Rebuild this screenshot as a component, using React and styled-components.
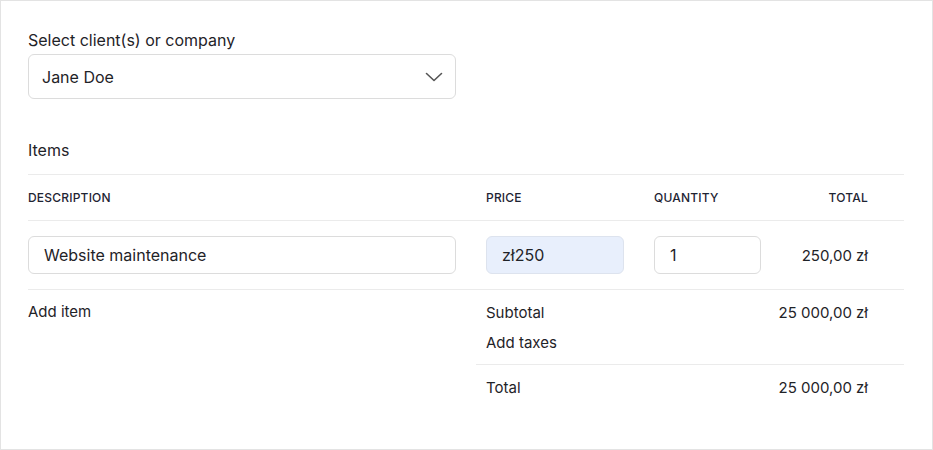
import React from "react";
import styled, { createGlobalStyle } from "styled-components";

const Global = createGlobalStyle`
  html, body { margin: 0; padding: 0; background: #fff; }
  body { font-family: Inter, "Noto Sans", sans-serif; color: #1f2328; }
  * { box-sizing: border-box; }
`;

const Frame = styled.div`
  width: 933px;
  height: 450px;
  border: 1px solid #e3e3e3;
  padding: 27px 28px 0 27px;
  background: #fff;
`;

const Label = styled.div`
  font-size: 16px;
  line-height: 24px;
  color: #1f2328;
  margin-bottom: 2px;
`;

const Select = styled.div`
  width: 428px;
  height: 45px;
  border: 1px solid #dcdcdc;
  border-radius: 6px;
  display: flex;
  align-items: center;
  justify-content: space-between;
  padding: 0 12px 0 13px;
  font-size: 16px;
  color: #1f2328;
`;

const SectionTitle = styled.div`
  font-size: 16px;
  line-height: 24px;
  margin-top: 39px;
  padding-bottom: 12px;
  border-bottom: 1px solid #ebebeb;
`;

const Row = styled.div`
  display: grid;
  grid-template-columns: 428px 138px 107px 77px;
  column-gap: 30px;
  align-items: center;
  padding-right: 36px;
  height: ${(p) => p.$h}px;
  border-bottom: 1px solid #ebebeb;
`;

const Head = styled.div`
  font-size: 12px;
  font-weight: 500;
  text-transform: uppercase;
  color: #1e2433;
  text-align: ${(p) => (p.$right ? "right" : "left")};
  letter-spacing: 0.2px;
`;

const Input = styled.div`
  height: 38px;
  border: 1px solid ${(p) => (p.$filled ? "#dde3ee" : "#dcdcdc")};
  background: ${(p) => (p.$filled ? "#e8effc" : "#fff")};
  border-radius: 6px;
  display: flex;
  align-items: center;
  padding-left: ${(p) => p.$pad}px;
  font-size: 16px;
  color: #1f2328;
`;

const Amount = styled.div`
  font-size: 15px;
  text-align: right;
  color: #1f2328;
  white-space: nowrap;
`;

const Bottom = styled.div`
  display: grid;
  grid-template-columns: 448px 428px;
  margin-top: 11px;
`;

const LinkText = styled.div`
  font-size: 15px;
  line-height: 22px;
  color: #1f2328;
`;

const Summary = styled.div`
  display: flex;
  flex-direction: column;
`;

const SumRow = styled.div`
  display: flex;
  justify-content: space-between;
  align-items: center;
  padding: 0 36px 0 10px;
  height: ${(p) => p.$h}px;
  margin-top: ${(p) => (p.$line ? 3 : 0)}px;
  border-top: ${(p) => (p.$line ? "1px solid #ebebeb" : "none")};
  font-size: 15px;
`;

const Chevron = () => (
  <svg width="18" height="18" viewBox="0 0 18 18" fill="none">
    <path d="M1.5 5.5 L9 12.5 L16.5 5.5" stroke="#555" strokeWidth="1.6" strokeLinecap="round" strokeLinejoin="round" />
  </svg>
);

export default function App() {
  return (
    <>
      <Global />
      <Frame>
        <Label>Select client(s) or company</Label>
        <Select>
          <span>Jane Doe</span>
          <Chevron />
        </Select>
        <SectionTitle>Items</SectionTitle>
        <Row $h={46}>
          <Head>Description</Head>
          <Head>Price</Head>
          <Head>Quantity</Head>
          <Head $right>Total</Head>
        </Row>
        <Row $h={69}>
          <Input $pad={15}>Website maintenance</Input>
          <Input $pad={15} $filled>zł250</Input>
          <Input $pad={15}>1</Input>
          <Amount>250,00 zł</Amount>
        </Row>
        <Bottom>
          <LinkText>Add item</LinkText>
          <Summary>
            <SumRow $h={22}>
              <span>Subtotal</span>
              <Amount>25 000,00 zł</Amount>
            </SumRow>
            <SumRow $h={38}>
              <span>Add taxes</span>
            </SumRow>
            <SumRow $h={46} $line>
              <span>Total</span>
              <Amount>25 000,00 zł</Amount>
            </SumRow>
          </Summary>
        </Bottom>
      </Frame>
    </>
  );
}
